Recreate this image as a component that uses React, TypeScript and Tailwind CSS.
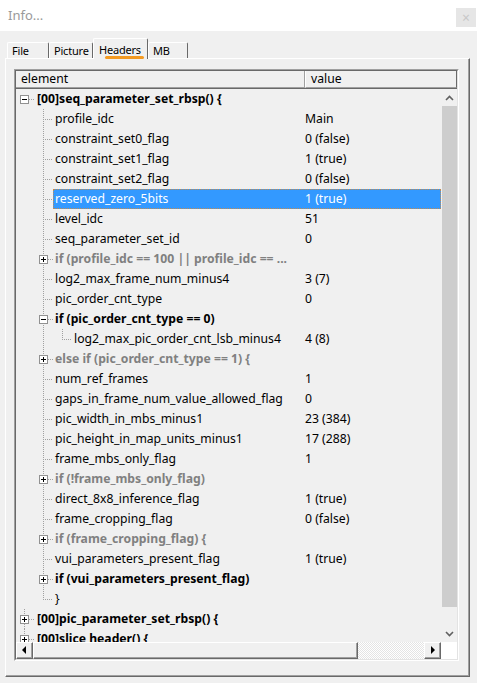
import React from 'react';

type Row = {
  el: string;
  val?: string;
  level: 0 | 1 | 2;
  box?: '+' | '-';
  kind?: 'black' | 'gray';
  last?: boolean;
  selected?: boolean;
  up?: boolean;
  down?: boolean;
};

const rows: Row[] = [
  { el: '[00]seq_parameter_set_rbsp() {', level: 0, box: '-', kind: 'black' },
  { el: 'profile_idc', val: 'Main', level: 1 },
  { el: 'constraint_set0_flag', val: '0 (false)', level: 1 },
  { el: 'constraint_set1_flag', val: '1 (true)', level: 1 },
  { el: 'constraint_set2_flag', val: '0 (false)', level: 1 },
  { el: 'reserved_zero_5bits', val: '1 (true)', level: 1, selected: true },
  { el: 'level_idc', val: '51', level: 1 },
  { el: 'seq_parameter_set_id', val: '0', level: 1 },
  { el: 'if (profile_idc == 100 || profile_idc == ...', level: 1, box: '+', kind: 'gray' },
  { el: 'log2_max_frame_num_minus4', val: '3 (7)', level: 1 },
  { el: 'pic_order_cnt_type', val: '0', level: 1 },
  { el: 'if (pic_order_cnt_type == 0)', level: 1, box: '-', kind: 'black' },
  { el: 'log2_max_pic_order_cnt_lsb_minus4', val: '4 (8)', level: 2, last: true },
  { el: 'else if (pic_order_cnt_type == 1) {', level: 1, box: '+', kind: 'gray' },
  { el: 'num_ref_frames', val: '1', level: 1 },
  { el: 'gaps_in_frame_num_value_allowed_flag', val: '0', level: 1 },
  { el: 'pic_width_in_mbs_minus1', val: '23 (384)', level: 1 },
  { el: 'pic_height_in_map_units_minus1', val: '17 (288)', level: 1 },
  { el: 'frame_mbs_only_flag', val: '1', level: 1 },
  { el: 'if (!frame_mbs_only_flag)', level: 1, box: '+', kind: 'gray' },
  { el: 'direct_8x8_inference_flag', val: '1 (true)', level: 1 },
  { el: 'frame_cropping_flag', val: '0 (false)', level: 1 },
  { el: 'if (frame_cropping_flag) {', level: 1, box: '+', kind: 'gray' },
  { el: 'vui_parameters_present_flag', val: '1 (true)', level: 1 },
  { el: 'if (vui_parameters_present_flag)', level: 1, box: '+', kind: 'black' },
  { el: '}', level: 1, last: true },
  { el: '[00]pic_parameter_set_rbsp() {', level: 0, box: '+', kind: 'black', up: true, down: true },
  { el: '[00]slice header() {', level: 0, box: '+', kind: 'black', up: true },
];

const indentW = ['w-[19px]', 'w-[37px]', 'w-[56px]'];
const elW = ['w-[270px]', 'w-[252px]', 'w-[233px]'];
const svgW = [19, 37, 56];

const DOT = '#a0a0a0';

const Box = ({ cx, sign }: { cx: number; sign: '+' | '-' }) => (
  <g shapeRendering="crispEdges">
    <rect x={cx - 3.5} y={6.5} width={8} height={8} fill="#ffffff" stroke="#919191" />
    <line x1={cx - 2} y1={10.5} x2={cx + 3} y2={10.5} stroke="#000" />
    {sign === '+' && <line x1={cx + 0.5} y1={8} x2={cx + 0.5} y2={13} stroke="#000" />}
  </g>
);

const TreeLines = ({ row }: { row: Row }) => {
  const w = svgW[row.level];
  return (
    <svg width={w} height={20} className={`${indentW[row.level]} shrink-0`} shapeRendering="crispEdges">
      {row.level === 0 && (
        <>
          {row.up && <line x1={8.5} y1={0} x2={8.5} y2={6} stroke={DOT} strokeDasharray="1 1" />}
          {row.down && <line x1={8.5} y1={15} x2={8.5} y2={20} stroke={DOT} strokeDasharray="1 1" />}
          <line x1={13} y1={10.5} x2={19} y2={10.5} stroke={DOT} strokeDasharray="1 1" />
          <Box cx={8} sign={row.box ?? '+'} />
        </>
      )}
      {row.level === 1 && (
        <>
          <line x1={27.5} y1={0} x2={27.5} y2={row.last ? 11 : 20} stroke={DOT} strokeDasharray="1 1" />
          <line x1={row.box ? 32 : 29} y1={10.5} x2={37} y2={10.5} stroke={DOT} strokeDasharray="1 1" />
          {row.box && <Box cx={27} sign={row.box} />}
        </>
      )}
      {row.level === 2 && (
        <>
          <line x1={27.5} y1={0} x2={27.5} y2={20} stroke={DOT} strokeDasharray="1 1" />
          <line x1={46.5} y1={0} x2={46.5} y2={11} stroke={DOT} strokeDasharray="1 1" />
          <line x1={48} y1={10.5} x2={56} y2={10.5} stroke={DOT} strokeDasharray="1 1" />
        </>
      )}
    </svg>
  );
};

const TreeRow = ({ row }: { row: Row }) => {
  const textColor = row.selected
    ? 'text-white'
    : row.kind === 'gray'
    ? 'text-[#808080]'
    : 'text-black';
  return (
    <div className="flex h-[20px] shrink-0 items-center">
      <TreeLines row={row} />
      <div
        className={`flex h-full flex-1 items-center ${
          row.selected ? 'bg-[#3399ff] outline-1 -outline-offset-1 outline-dotted outline-[#c08a50]' : ''
        }`}
      >
        <span
          className={`${elW[row.level]} overflow-hidden whitespace-nowrap pl-[2px] ${textColor} ${
            row.kind ? 'font-bold' : ''
          }`}
        >
          {row.el}
        </span>
        <span className={`whitespace-nowrap ${row.selected ? 'text-white' : 'text-black'}`}>{row.val}</span>
      </div>
    </div>
  );
};

const Raised = ({ className, children }: { className?: string; children?: React.ReactNode }) => (
  <div
    className={`border border-t-white border-l-white border-r-[#696969] border-b-[#696969] bg-[#f0f0f0] ${className ?? ''}`}
  >
    <div className="flex h-full w-full items-center justify-center border-r border-b border-[#a0a0a0]">
      {children}
    </div>
  </div>
);

const Tab = ({ label, w, active }: { label: string; w: string; active?: boolean }) => (
  <div
    className={`${w} ${
      active ? 'relative top-px z-10 h-[21px] pt-[1px] pl-[5px]' : 'h-[16px] pl-[4px]'
    } flex items-center rounded-t-[2px] border-t border-l border-r border-t-white border-l-white border-r-[#696969] bg-[#f0f0f0] text-[11px] tracking-[-0.2px] text-black`}
  >
    <span className="leading-none">{label}</span>
    {active && <span className="absolute top-[17px] left-[11px] h-[3px] w-[39px] rounded-full bg-[#f39a22]" />}
  </div>
);

export default function App() {
  return (
    <div
      className="flex h-[687px] w-[477px] flex-col overflow-hidden bg-white text-[12.2px]"
      style={{ fontFamily: '"Noto Sans", "Noto Sans CJK SC", sans-serif' }}
    >
      {/* title bar */}
      <div className="flex h-[31px] shrink-0 items-start justify-between pl-[8px] pr-[1px]">
        <span className="pt-[6px] text-[13px] text-[#9a9a9a]">Info...</span>
        <div className="mt-[8px] flex h-[19px] w-[20px] items-center justify-center bg-[#e6e6e6] text-[14px] leading-none text-[#c8c8c8]">
          ×
        </div>
      </div>

      {/* body */}
      <div className="flex h-[652px] shrink-0 flex-col bg-[#f0f0f0] pt-[7px]">
        <div className="flex h-[20px] items-end pl-[7px]">
          <Tab label="File" w="w-[42px]" />
          <Tab label="Picture" w="w-[44px]" />
          <Tab label="Headers" w="w-[55px]" active />
          <Tab label="MB" w="w-[40px]" />
        </div>

        <div className="ml-[5px] h-[619px] w-[465px] border border-t-white border-l-white border-r-[#696969] border-b-[#696969]">
          <div className="h-full w-full border-r border-b border-[#a0a0a0] pt-[10px] pl-[8px]">
            {/* list view */}
            <div className="h-[592px] w-[445px] border border-t-[#a0a0a0] border-l-[#a0a0a0] border-r-white border-b-white">
              <div className="flex h-full w-full flex-col border border-t-[#696969] border-l-[#696969] border-r-[#e3e3e3] border-b-[#e3e3e3]">
                {/* header */}
                <div className="flex h-[18px] shrink-0 border-b border-[#696969]">
                  <div className="flex w-[289px] items-center border-r border-b border-r-[#a0a0a0] border-b-[#a0a0a0] pl-[5px] text-black">
                    element
                  </div>
                  <div className="flex flex-1 items-center border-l border-b border-r border-l-white border-b-[#a0a0a0] border-r-[#696969] pl-[5px] text-black">
                    value
                  </div>
                </div>

                {/* rows + vertical scrollbar */}
                <div className="flex h-[553px] shrink-0">
                  <div className="flex w-[425px] flex-col overflow-hidden">
                    {rows.map((r, i) => (
                      <TreeRow key={i} row={r} />
                    ))}
                  </div>
                  <div className="flex w-[16px] flex-col bg-[#f0f0f0]">
                    <div className="flex h-[17px] items-center justify-center">
                      <svg width="9" height="6">
                        <polyline points="1,5 4.5,1.5 8,5" fill="none" stroke="#606060" strokeWidth="1.6" />
                      </svg>
                    </div>
                    <div className="ml-[1px] h-[501px] w-[15px] bg-[#cdcdcd]" />
                    <div className="flex-1" />
                    <div className="flex h-[17px] items-center justify-center">
                      <svg width="9" height="6">
                        <polyline points="1,1 4.5,4.5 8,1" fill="none" stroke="#606060" strokeWidth="1.6" />
                      </svg>
                    </div>
                  </div>
                </div>

                {/* horizontal scrollbar */}
                <div className="flex h-[17px] shrink-0">
                  <Raised className="w-[17px]">
                    <svg width="5" height="8">
                      <polygon points="4,0 4,8 0,4" fill="#000" />
                    </svg>
                  </Raised>
                  <Raised className="w-[325px]" />
                  <div className="flex-1 bg-[repeating-conic-gradient(#ffffff_0%_25%,#e4e4e4_0%_50%)] bg-[length:2px_2px]" />
                  <Raised className="w-[17px]">
                    <svg width="5" height="8">
                      <polygon points="1,0 1,8 5,4" fill="#000" />
                    </svg>
                  </Raised>
                  <div className="w-[16px] bg-white" />
                </div>
              </div>
            </div>
          </div>
        </div>
      </div>
    </div>
  );
}
